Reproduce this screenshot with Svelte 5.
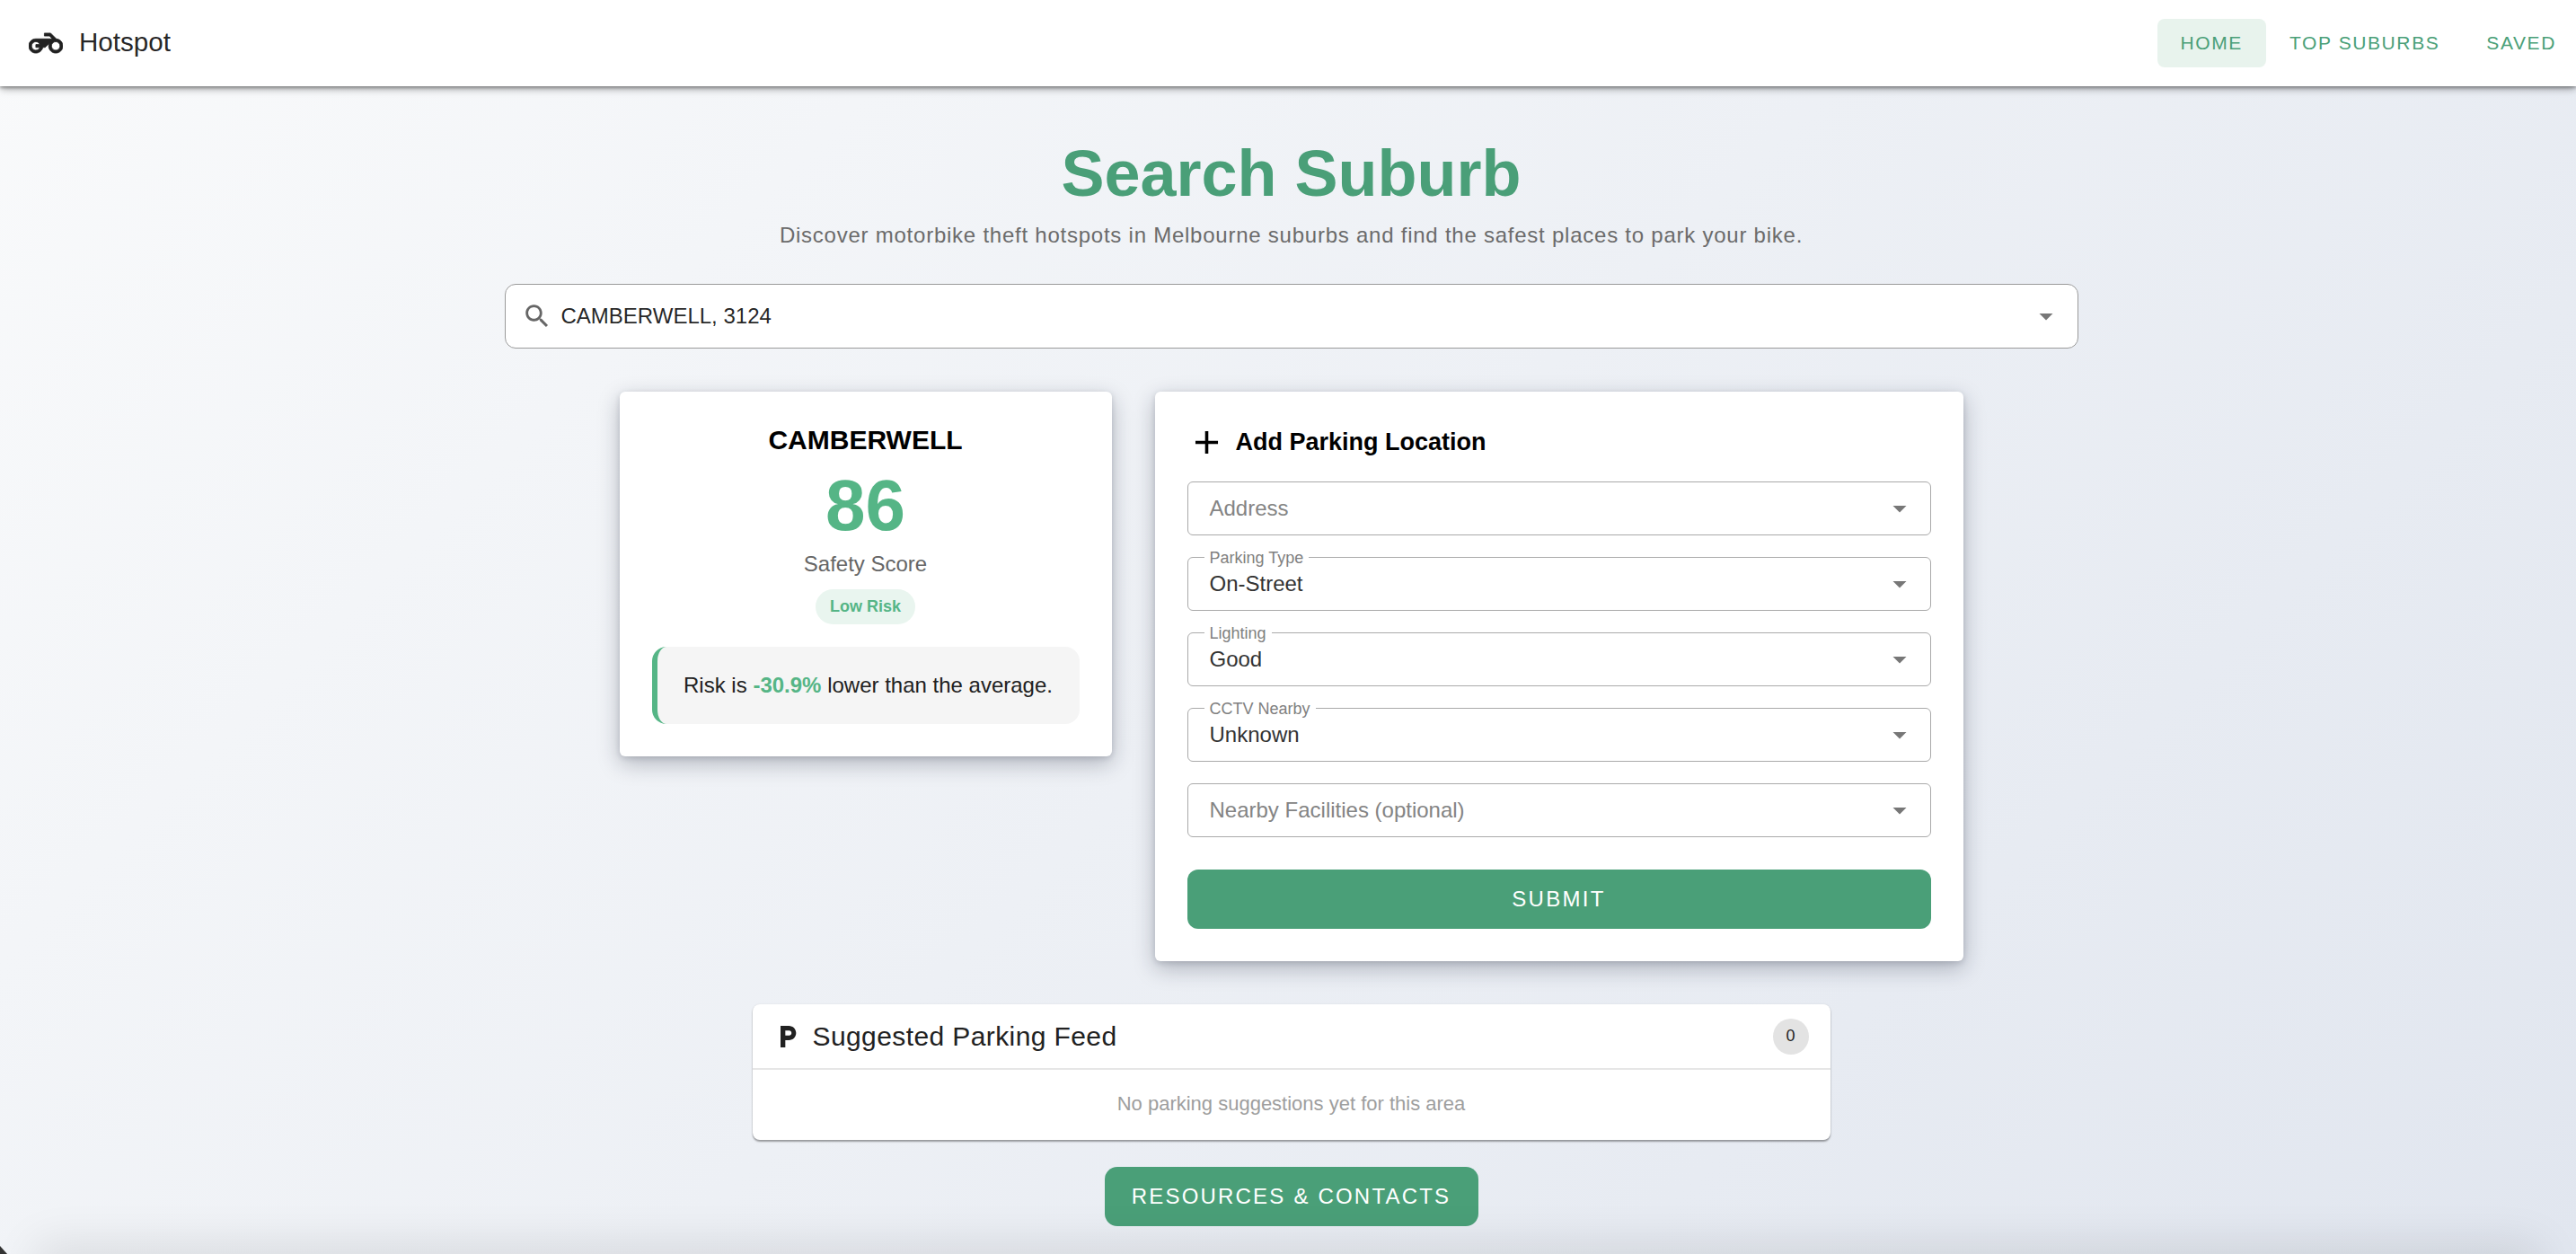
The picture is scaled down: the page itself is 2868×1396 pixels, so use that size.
<script>
  const fields = [
    { label: '', value: '', placeholder: 'Address' },
    { label: 'Parking Type', value: 'On-Street' },
    { label: 'Lighting', value: 'Good' },
    { label: 'CCTV Nearby', value: 'Unknown' },
    { label: '', value: '', placeholder: 'Nearby Facilities (optional)' }
  ];
</script>

<div class="page">
  <header class="bar">
    <div class="brand">
      <svg class="bike" viewBox="0 0 24 24"><path d="M19.44 9.03L15.41 5H11v2h3.59l2 2H5c-2.8 0-5 2.2-5 5s2.2 5 5 5c2.46 0 4.45-1.69 4.9-4h1.65l2.77-2.77c-.21.54-.32 1.14-.32 1.77 0 2.8 2.2 5 5 5s5-2.2 5-5c0-2.65-1.97-4.77-4.56-4.97zM7.82 15C7.4 16.15 6.28 17 5 17c-1.63 0-3-1.37-3-3s1.37-3 3-3c1.28 0 2.4.85 2.82 2H5v2h2.82zM19 17c-1.66 0-3-1.34-3-3s1.34-3 3-3 3 1.34 3 3-1.34 3-3 3z"/></svg>
      <span class="brand-name">Hotspot</span>
    </div>
    <nav class="nav">
      <a class="nav-item active">HOME</a>
      <a class="nav-item">TOP SUBURBS</a>
      <a class="nav-item">SAVED</a>
    </nav>
  </header>

  <main class="main">
    <h1 class="title">Search Suburb</h1>
    <p class="subtitle">Discover motorbike theft hotspots in Melbourne suburbs and find the safest places to park your bike.</p>

    <div class="search">
      <svg class="search-icon" viewBox="0 0 24 24"><path d="M15.5 14h-.79l-.28-.27C15.41 12.59 16 11.11 16 9.5 16 5.91 13.09 3 9.5 3S3 5.91 3 9.5 5.91 16 9.5 16c1.61 0 3.09-.59 4.23-1.57l.27.28v.79l5 4.99L20.49 19l-4.99-5zm-6 0C7.01 14 5 11.99 5 9.5S7.01 5 9.5 5 14 7.01 14 9.5 11.99 14 9.5 14z"/></svg>
      <span class="search-text">CAMBERWELL, 3124</span>
      <svg class="caret search-caret" viewBox="0 0 24 24"><path d="M7 10l5 5 5-5z"/></svg>
    </div>

    <section class="cards">
      <article class="card score">
        <h2 class="suburb">CAMBERWELL</h2>
        <div class="number">86</div>
        <div class="score-label">Safety Score</div>
        <span class="chip">Low Risk</span>
        <div class="risk">Risk is <b>-30.9%</b> lower than the average.</div>
      </article>

      <article class="card form">
        <div class="form-head">
          <svg class="plus" viewBox="0 0 24 24"><path d="M19 13h-6v6h-2v-6H5v-2h6V5h2v6h6v2z"/></svg>
          <h2 class="form-title">Add Parking Location</h2>
        </div>
        <div class="fields">
          {#each fields as f}
            <div class="field">
              {#if f.label}<span class="field-label">{f.label}</span>{/if}
              {#if f.placeholder}
                <span class="placeholder">{f.placeholder}</span>
              {:else}
                <span class="value">{f.value}</span>
              {/if}
              <svg class="caret" viewBox="0 0 24 24"><path d="M7 10l5 5 5-5z"/></svg>
            </div>
          {/each}
        </div>
        <button class="submit">SUBMIT</button>
      </article>
    </section>

    <section class="feed">
      <div class="feed-head">
        <svg class="p-icon" viewBox="0 0 24 24"><path d="M13 3H6v18h4v-6h3c3.31 0 6-2.69 6-6s-2.69-6-6-6zm.2 8H10V7h3.2c1.1 0 2 .9 2 2s-.9 2-2 2z"/></svg>
        <h3 class="feed-title">Suggested Parking Feed</h3>
        <span class="count">0</span>
      </div>
      <div class="feed-empty">No parking suggestions yet for this area</div>
    </section>

    <button class="resources">RESOURCES &amp; CONTACTS</button>
  </main>
  <div class="foot-shadow"></div>
  <div class="corner"></div>
</div>

<style>
  :global(body) {
    margin: 0;
    font-family: "Liberation Sans", Arial, sans-serif;
    color: rgba(0, 0, 0, 0.87);
  }
  .page {
    position: relative;
    height: 1396px;
    overflow: hidden;
    background: linear-gradient(135deg, #f9fafb 0%, #e1e6ef 100%);
  }
  .bar {
    position: relative;
    z-index: 1;
    box-sizing: border-box;
    height: 96px;
    padding: 0 0 0 32px;
    display: flex;
    align-items: center;
    justify-content: space-between;
    background: #fff;
    box-shadow: 0 4px 8px -1px rgba(0, 0, 0, 0.35), 0 2px 3px rgba(0, 0, 0, 0.25);
  }
  .brand { display: flex; align-items: center; gap: 18px; }
  .bike { width: 38px; height: 38px; fill: #212121; stroke: #212121; stroke-width: 0.5; display: block; }
  .brand-name { font-size: 29.6px; line-height: 34px; margin-top: -2px; }
  .nav { display: flex; margin-right: -4px; }
  .nav-item {
    box-sizing: border-box;
    height: 54px;
    display: flex;
    align-items: center;
    padding: 0 26px;
    font-size: 21px;
    letter-spacing: 1.6px;
    color: #4a9f78;
    border-radius: 8px;
  }
  .nav-item.active { background: #e8f3ed; }
  .main {
    display: flex;
    flex-direction: column;
    align-items: center;
    padding-left: 7px;
  }
  .title {
    margin: 54px 0 0;
    font-size: 72px;
    line-height: 86px;
    font-weight: 700;
    color: #4a9f78;
  }
  .subtitle {
    margin: 12px 0 0;
    font-size: 24px;
    line-height: 28px;
    letter-spacing: 0.76px;
    color: #6b6b6b;
  }
  .search {
    box-sizing: border-box;
    margin-top: 40px;
    width: 1752px;
    height: 72px;
    display: flex;
    align-items: center;
    padding: 0 17px 0 18px;
    background: #fff;
    border: 1px solid #9a9a9a;
    border-radius: 12px;
  }
  .search-icon { width: 34px; height: 34px; fill: #666; margin-right: 10px; flex: none; }
  .search-text { flex: 1; font-size: 24px; }
  .caret { width: 36px; height: 36px; fill: #777; flex: none; }
  .cards {
    margin-top: 48px;
    display: flex;
    align-items: flex-start;
    gap: 48px;
  }
  .card {
    box-sizing: border-box;
    background: #fff;
    border-radius: 6px;
    box-shadow: 0 8px 24px rgba(20, 30, 50, 0.28), 0 2px 6px rgba(20, 30, 50, 0.15);
  }
  .score {
    width: 548px;
    height: 406px;
    padding: 36px 36px 0;
    display: flex;
    flex-direction: column;
    align-items: center;
  }
  .suburb { margin: 0; font-size: 30px; line-height: 36px; font-weight: 700; color: #000; }
  .number { margin-top: 11px; font-size: 80px; line-height: 88px; font-weight: 700; color: #55b586; }
  .score-label { margin-top: 5px; font-size: 24px; line-height: 32px; color: #666; }
  .chip {
    margin-top: 12px;
    height: 39px;
    display: flex;
    align-items: center;
    padding: 0 16px;
    border-radius: 20px;
    background: #e9f5ef;
    color: #55b586;
    font-size: 18px;
    font-weight: 700;
  }
  .risk {
    box-sizing: border-box;
    margin-top: 25px;
    width: 476px;
    height: 86px;
    display: flex;
    align-items: center;
    justify-content: center;
    gap: 0.28em;
    background: #f5f5f5;
    border-left: 6px solid #55b586;
    border-radius: 16px;
    font-size: 24px;
    color: #212121;
  }
  .risk b { color: #55b586; font-weight: 700; }
  .form {
    width: 900px;
    height: 634px;
    padding: 34px 36px 0;
  }
  .form-head { display: flex; align-items: center; gap: 11px; height: 44px; }
  .plus { width: 43px; height: 43px; fill: #000; flex: none; }
  .form-title { margin: 0; font-size: 27px; font-weight: 700; color: #000; }
  .fields {
    margin-top: 22px;
    display: flex;
    flex-direction: column;
    gap: 24px;
  }
  .field {
    position: relative;
    box-sizing: border-box;
    height: 60px;
    display: flex;
    align-items: center;
    justify-content: space-between;
    padding: 0 16px 0 24px;
    border: 1px solid #aaa;
    border-radius: 6px;
  }
  .field-label {
    position: absolute;
    left: 18px;
    top: -10px;
    padding: 0 6px;
    background: #fff;
    font-size: 18px;
    line-height: 20px;
    color: #808080;
  }
  .value { font-size: 24px; color: #333; }
  .placeholder { font-size: 24px; color: #848484; }
  .submit {
    display: block;
    box-sizing: border-box;
    width: 100%;
    height: 66px;
    margin-top: 36px;
    border: 0;
    border-radius: 12px;
    background: #4a9f78;
    color: #fff;
    font: inherit;
    font-size: 24px;
    letter-spacing: 2.3px;
  }
  .feed {
    box-sizing: border-box;
    margin-top: 48px;
    width: 1200px;
    height: 151px;
    background: #fff;
    border-radius: 8px;
    box-shadow: 0 2px 2px rgba(0, 0, 0, 0.35), 0 0 2px rgba(0, 0, 0, 0.1);
  }
  .feed-head {
    box-sizing: border-box;
    height: 73px;
    display: flex;
    align-items: center;
    padding: 0 24px 0 23px;
    border-bottom: 2px solid #e6e6e6;
  }
  .p-icon { width: 32px; height: 32px; fill: #212121; flex: none; }
  .feed-title { flex: 1; margin: 0 0 0 12px; font-size: 30px; font-weight: 400; letter-spacing: 0.4px; color: #212121; }
  .count {
    width: 40px;
    height: 40px;
    display: flex;
    align-items: center;
    justify-content: center;
    border-radius: 50%;
    background: #e3e3e3;
    font-size: 18px;
    color: #212121;
  }
  .feed-empty {
    height: 76px;
    display: flex;
    align-items: center;
    justify-content: center;
    font-size: 22px;
    color: #9e9e9e;
  }
  .resources {
    box-sizing: border-box;
    margin-top: 30px;
    width: 416px;
    height: 66px;
    border: 0;
    border-radius: 14px;
    background: #4a9f78;
    color: #fff;
    font: inherit;
    font-size: 24px;
    letter-spacing: 2.2px;
  }
  .foot-shadow {
    position: absolute;
    left: 50px;
    right: 50px;
    bottom: -30px;
    height: 30px;
    box-shadow: 0 0 50px 10px rgba(0, 0, 0, 0.1);
  }
  .corner {
    position: absolute;
    left: 0;
    bottom: 0;
    width: 8px;
    height: 9px;
    background: #333;
    clip-path: polygon(0 0, 100% 100%, 0 100%);
  }
</style>
